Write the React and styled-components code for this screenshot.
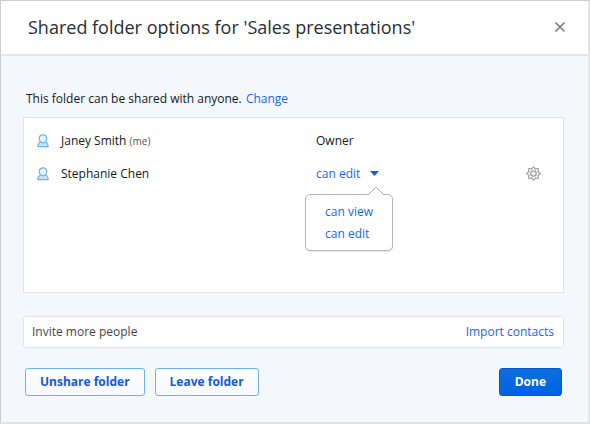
import React, { useState } from "react";
import styled, { createGlobalStyle, css } from "styled-components";

const GlobalStyle = createGlobalStyle`
  *, *::before, *::after { box-sizing: border-box; }
  body {
    margin: 0;
    background: #fff;
    color: #15171b;
    font-family: "Open Sans", "Noto Sans", sans-serif;
    font-size: 12px;
    line-height: 20px;
  }
  button, input { font: inherit; color: inherit; }
`;

const Dialog = styled.section`
  display: flex;
  flex-direction: column;
  min-height: 100vh;
  border: 1px solid #ccc;
  border-right: 2px solid #e4e5e7;
  border-bottom: 2px solid #e1e2e4;
  background: #f4f8fd;
`;

const Header = styled.header`
  display: flex;
  align-items: center;
  justify-content: space-between;
  padding: 12px 22px 13px 27px;
  border-bottom: 2px solid #e6e7e9;
  background: #fff;
`;

const Title = styled.h1`
  margin: 0;
  font-size: 18px;
  line-height: 28px;
  font-weight: 400;
  color: #2a2d33;
`;

const IconButton = styled.button`
  display: flex;
  padding: 0;
  border: 0;
  background: none;
  color: ${(p) => p.$tone};
  cursor: pointer;
`;

const Body = styled.div`
  padding: 33px 24px 26px 22px;
`;

const Notice = styled.p`
  margin: 0 0 8px 3px;
`;

const Link = styled.a`
  color: #1467f0;
  text-decoration: none;
`;

const ChangeLink = styled(Link)`
  margin-left: 1px;
`;

const People = styled.ul`
  min-height: 176px;
  margin: 0;
  padding: 6px 22px 6px 13px;
  border: 1px solid #e0e2e4;
  background: #fff;
  list-style: none;
`;

const Person = styled.li`
  display: grid;
  grid-template-columns: 24px 255fr 210fr 15px;
  align-items: center;
  height: 33px;
`;

const Me = styled.small`
  font-size: 10px;
  line-height: 10px;
  color: #555;
`;

const Permission = styled.div`
  position: relative;
  justify-self: start;
`;

const textButton = css`
  display: flex;
  align-items: center;
  padding: 0;
  border: 0;
  background: none;
  color: #1467f0;
  cursor: pointer;
`;

const PermissionButton = styled.button`
  ${textButton}
  gap: 10px;
`;

const Menu = styled.div`
  position: absolute;
  z-index: 1;
  top: 30px;
  left: -11px;
  width: 88px;
  padding: 6px 0 5px 19px;
  border: 1px solid #b4b8bc;
  border-radius: 5px;
  background: #fff;
  box-shadow: 0 1px 1px rgba(0, 0, 0, 0.1);
`;

const Pointer = styled.svg`
  position: absolute;
  top: -9px;
  right: 7px;
`;

const MenuItem = styled.button`
  ${textButton}
  height: 22px;
  white-space: nowrap;
`;

const Invite = styled.div`
  display: flex;
  align-items: center;
  margin-top: 23px;
  padding: 5px 9px 5px 8px;
  border: 1px solid #e0e2e4;
  border-radius: 3px;
  background: #fff;
`;

const InviteInput = styled.input`
  flex: 1;
  min-width: 0;
  padding: 0;
  border: 0;
  outline: 0;
  background: none;
  &::placeholder { color: #44474b; opacity: 1; }
`;

const Actions = styled.footer`
  display: flex;
  gap: 10px;
  margin: 20px 2px 0 2px;
`;

const Button = styled.button`
  height: 28px;
  padding: 0 14px;
  border: 1px solid #6cb1f0;
  border-radius: 3px;
  background: linear-gradient(#fff, #f5faff);
  color: #1459dc;
  font-weight: 700;
  cursor: pointer;
`;

const PrimaryButton = styled(Button)`
  margin-left: auto;
  padding: 0 15px;
  border-color: #0a55cc;
  background: linear-gradient(#0a70de, #0261e4);
  color: #fff;
`;

function CloseIcon() {
  return (
    <svg width="12" height="12" viewBox="0 0 12 12" aria-hidden="true">
      <path d="M1.500 1.500l9 9M10.500 1.500l-9 9" stroke="currentColor" strokeWidth="1.600" />
    </svg>
  );
}

function PersonIcon() {
  return (
    <svg width="12" height="14" viewBox="0 0 12 14" aria-hidden="true">
      <path
        d="M3.800 7.700C1.700 8.400 1 9.500 .8 12.600h10.400C11 9.500 10.300 8.400 8.200 7.700z"
        fill="#c9e3fa" stroke="#6eb2ee" strokeWidth="1.200" strokeLinejoin="round"
      />
      <path
        d="M6 .9c2.400 0 3.700 1.500 3.700 3.700S8.200 8.800 6 8.800 2.300 6.800 2.300 4.600 3.600.9 6 .9z"
        fill="#eaf5fe" stroke="#6eb2ee" strokeWidth="1.200"
      />
    </svg>
  );
}

function GearIcon() {
  return (
    <svg width="15" height="15" viewBox="0 0 15 15" fill="none" stroke="currentColor" aria-hidden="true">
      <path
        d="M5.700 3.200Q7.500 -1.700 9.300 3.200Q14 1 11.800 5.700Q16.700 7.500 11.800 9.300Q14 14 9.300 11.800Q7.500 16.700 5.700 11.800Q1 14 3.200 9.300Q-1.700 7.500 3.200 5.700Q1 1 5.700 3.200z"
        strokeWidth="1.200" strokeLinejoin="round"
      />
      <circle cx="7.500" cy="7.500" r="2.700" strokeWidth="1.200" />
    </svg>
  );
}

function PermissionPicker() {
  const [value, setValue] = useState("can edit");
  const [open, setOpen] = useState(true);
  const choose = (next) => {
    setValue(next);
    setOpen(false);
  };
  return (
    <Permission>
      <PermissionButton type="button" aria-haspopup="menu" aria-expanded={open} onClick={() => setOpen(!open)}>
        {value}
        <svg width="9" height="5" viewBox="0 0 9 5" aria-hidden="true">
          <path d="M0 0h9L4.500 5z" fill="#0b5fe6" />
        </svg>
      </PermissionButton>
      {open && (
        <Menu role="menu" aria-label="Permission">
          <Pointer width="18" height="10" viewBox="0 0 18 10" aria-hidden="true">
            <path d="M.5 10L9 1l8.500 9" fill="#fff" />
            <path d="M0 8.500h1.500L9 1l7.500 7.500H18" fill="none" stroke="#aeb3b8" />
          </Pointer>
          {["can view", "can edit"].map((option) => (
            <MenuItem key={option} type="button" role="menuitem" onClick={() => choose(option)}>
              {option}
            </MenuItem>
          ))}
        </Menu>
      )}
    </Permission>
  );
}

export default function App() {
  return (
    <>
      <GlobalStyle />
      <Dialog role="dialog" aria-labelledby="dialog-title">
        <Header>
          <Title id="dialog-title">Shared folder options for 'Sales presentations'</Title>
          <IconButton type="button" aria-label="Close" $tone="#777">
            <CloseIcon />
          </IconButton>
        </Header>
        <Body>
          <Notice>
            This folder can be shared with anyone. <ChangeLink href="#change">Change</ChangeLink>
          </Notice>
          <People>
            <Person>
              <PersonIcon />
              <span>Janey Smith <Me>(me)</Me></span>
              <span>Owner</span>
            </Person>
            <Person>
              <PersonIcon />
              <span>Stephanie Chen</span>
              <PermissionPicker />
              <IconButton type="button" aria-label="Settings for Stephanie Chen" $tone="#999">
                <GearIcon />
              </IconButton>
            </Person>
          </People>
          <Invite>
            <InviteInput type="text" aria-label="Invite more people" placeholder="Invite more people" />
            <Link href="#import">Import contacts</Link>
          </Invite>
          <Actions>
            <Button type="button">Unshare folder</Button>
            <Button type="button">Leave folder</Button>
            <PrimaryButton type="button">Done</PrimaryButton>
          </Actions>
        </Body>
      </Dialog>
    </>
  );
}
